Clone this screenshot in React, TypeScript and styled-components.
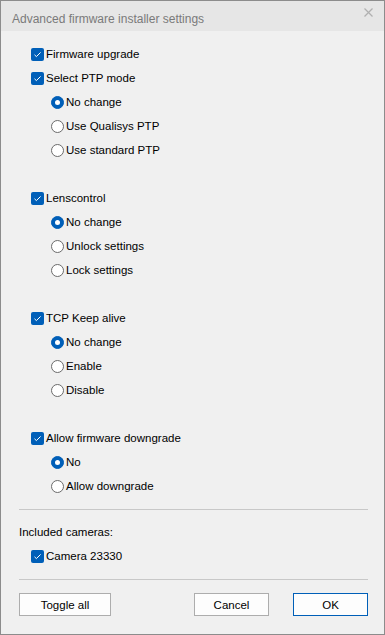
import styled, { createGlobalStyle } from "styled-components";

const GlobalStyle = createGlobalStyle`
  html, body {
    margin: 0;
    padding: 0;
    background: #f0f0f0;
  }
  * {
    box-sizing: border-box;
  }
`;

const Window = styled.div`
  width: 385px;
  height: 635px;
  border: 1px solid #8c8c8c;
  background: #f0f0f0;
  display: flex;
  flex-direction: column;
  font-family: "Liberation Sans", Arial, sans-serif;
  font-size: 11.5px;
  color: #000;
`;

const TitleBar = styled.div`
  height: 30px;
  background: #e6e6e6;
  display: flex;
  align-items: center;
  justify-content: space-between;
  padding: 0 11px 0 11px;
  flex-shrink: 0;
`;

const Title = styled.span`
  color: #7a7a7a;
  font-size: 12px;
  margin-top: 6px;
`;

const CloseBtn = styled.span`
  color: #b0b0b0;
  display: flex;
  margin-top: -8px;
`;

const Body = styled.div`
  flex: 1;
  display: flex;
  flex-direction: column;
  padding: 11px 16px 0 18px;
`;

const Row = styled.div<{ $indent?: boolean }>`
  height: 24px;
  display: flex;
  align-items: center;
  gap: 2px;
  padding-left: ${(p) => (p.$indent ? "32px" : "12px")};
`;

const Spacer = styled.div`
  height: 24px;
`;

const Box = styled.span`
  width: 13px;
  height: 13px;
  border-radius: 2px;
  background: #005fb8;
  display: flex;
  align-items: center;
  justify-content: center;
  flex-shrink: 0;
`;

const Radio = styled.span<{ $on?: boolean }>`
  width: 13px;
  height: 13px;
  border-radius: 50%;
  flex-shrink: 0;
  background: ${(p) => (p.$on ? "#005fb8" : "#fff")};
  border: 1px solid ${(p) => (p.$on ? "#005fb8" : "#6b6b6b")};
  display: flex;
  align-items: center;
  justify-content: center;
  &::after {
    content: "";
    display: ${(p) => (p.$on ? "block" : "none")};
    width: 5px;
    height: 5px;
    border-radius: 50%;
    background: #fff;
  }
`;

const Label = styled.span`
  white-space: nowrap;
`;

const Separator = styled.div<{ $top: number }>`
  height: 1px;
  background: #c8c8c8;
  margin-top: ${(p) => p.$top}px;
`;

const Caption = styled.div`
  height: 24px;
  display: flex;
  align-items: center;
  margin-top: 10px;
`;

const Buttons = styled.div`
  display: flex;
  margin-top: 13px;
  gap: 24px;
`;

const Button = styled.button<{ $primary?: boolean; $wide?: boolean }>`
  height: 23px;
  width: ${(p) => (p.$wide ? "92px" : "75px")};
  background: #fdfdfd;
  border: 1px solid ${(p) => (p.$primary ? "#005fb8" : "#adadad")};
  font-family: inherit;
  font-size: 11.5px;
  color: #000;
  padding: 0;
  margin-right: ${(p) => (p.$wide ? "auto" : "0")};
`;

function Check() {
  return (
    <Box>
      <svg width="9" height="9" viewBox="0 0 9 9">
        <path d="M1.5 4.8 L3.4 6.6 L7.6 2.4" fill="none" stroke="#fff" strokeWidth="1" />
      </svg>
    </Box>
  );
}

function CheckRow({ label }: { label: string }) {
  return (
    <Row>
      <Check />
      <Label>{label}</Label>
    </Row>
  );
}

function RadioRow({ label, on }: { label: string; on?: boolean }) {
  return (
    <Row $indent>
      <Radio $on={on} />
      <Label>{label}</Label>
    </Row>
  );
}

export default function App() {
  return (
    <>
      <GlobalStyle />
      <Window>
        <TitleBar>
          <Title>Advanced firmware installer settings</Title>
          <CloseBtn>
            <svg width="9" height="9" viewBox="0 0 9 9">
              <path d="M0.5 0.5 L8.5 8.5 M8.5 0.5 L0.5 8.5" stroke="#b0b0b0" strokeWidth="1.2" />
            </svg>
          </CloseBtn>
        </TitleBar>
        <Body>
          <CheckRow label="Firmware upgrade" />
          <CheckRow label="Select PTP mode" />
          <RadioRow label="No change" on />
          <RadioRow label="Use Qualisys PTP" />
          <RadioRow label="Use standard PTP" />
          <Spacer />
          <CheckRow label="Lenscontrol" />
          <RadioRow label="No change" on />
          <RadioRow label="Unlock settings" />
          <RadioRow label="Lock settings" />
          <Spacer />
          <CheckRow label="TCP Keep alive" />
          <RadioRow label="No change" on />
          <RadioRow label="Enable" />
          <RadioRow label="Disable" />
          <Spacer />
          <CheckRow label="Allow firmware downgrade" />
          <RadioRow label="No" on />
          <RadioRow label="Allow downgrade" />
          <Separator $top={11} />
          <Caption>Included cameras:</Caption>
          <CheckRow label="Camera 23330" />
          <Separator $top={11} />
          <Buttons>
            <Button $wide>Toggle all</Button>
            <Button>Cancel</Button>
            <Button $primary>OK</Button>
          </Buttons>
        </Body>
      </Window>
    </>
  );
}
